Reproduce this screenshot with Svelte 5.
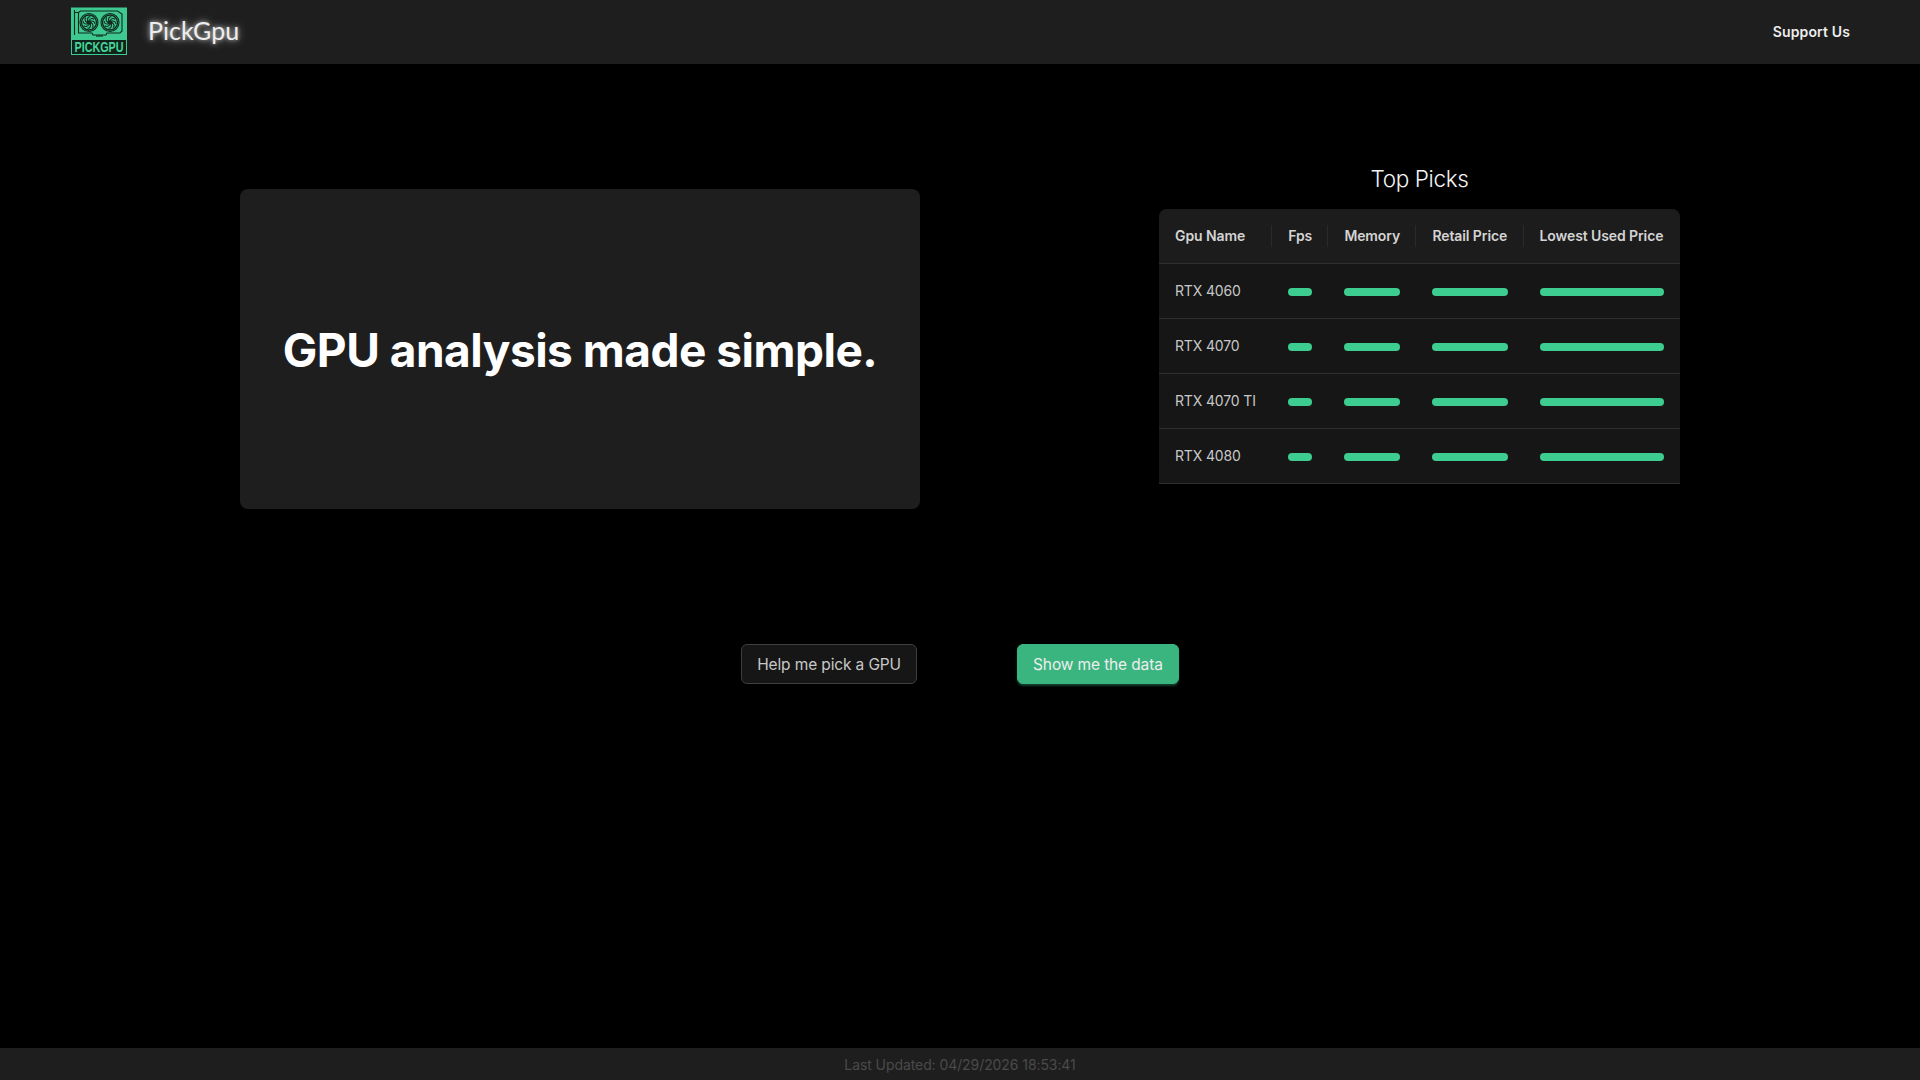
<script>
  const rows = ['RTX 4060', 'RTX 4070', 'RTX 4070 TI', 'RTX 4080']
  const columns = ['Gpu Name', 'Fps', 'Memory', 'Retail Price', 'Lowest Used Price']
  const fans = [18, 39]
  const blades = [0, 45, 90, 135, 180, 225, 270, 315]
</script>

<div class="page">
  <header>
    <div class="brand">
      <svg class="logo" viewBox="0 0 56 48" aria-label="PickGpu logo">
        <rect x="0" y="0.500" width="56" height="32" fill="#3dc98f" />
        <g fill="none" stroke="#12291f" stroke-width="1.1">
          <path d="M3.5 3v25M3.5 5.5h4l2-1.5h37l4.500 3v17l-2 2H36l-1 2H22l-1-2H7.500v-21" />
          <path d="M25 29h7" />
          {#each fans as cx}
            <circle {cx} cy="15.500" r="9" fill="#3dc98f" />
            <circle {cx} cy="15.500" r="7.500" stroke-width="1.400" />
            <circle {cx} cy="15.500" r="1.800" fill="#12291f" />
            {#each blades as angle}
              <path d="M{cx} 13.500c1.800-2.500 4-2.600 5-1" transform="rotate({angle} {cx} 15.500)" />
            {/each}
          {/each}
        </g>
        <rect x="0.500" y="32.500" width="55" height="15" fill="#10241b" stroke="#3dc98f" stroke-width="1" />
        <text x="36.400" y="45" text-anchor="middle" transform="scale(0.77 1)" class="logo-text">PICKGPU</text>
      </svg>
      <span class="name">PickGpu</span>
    </div>
    <span class="support">Support Us</span>
  </header>

  <main>
    <section class="top">
      <div class="hero">
        <h1>GPU analysis made simple.</h1>
      </div>
      <div class="picks">
        <h2>Top Picks</h2>
        <table>
          <thead>
            <tr>
              {#each columns as col}
                <th><span>{col}</span></th>
              {/each}
            </tr>
          </thead>
          <tbody>
            {#each rows as row}
              <tr>
                <td>{row}</td>
                <td><div class="bar"></div></td>
                <td><div class="bar"></div></td>
                <td><div class="bar"></div></td>
                <td><div class="bar"></div></td>
              </tr>
            {/each}
          </tbody>
        </table>
      </div>
    </section>

    <div class="actions">
      <button class="outline">Help me pick a GPU</button>
      <button class="primary">Show me the data</button>
    </div>
  </main>

  <footer>Last Updated: 04/29/2026 18:53:41</footer>
</div>

<style>
  :global(body) {
    background: #000;
    font-family: Inter, "Liberation Sans", sans-serif;
  }

  .page {
    display: flex;
    flex-direction: column;
    height: 100vh;
    overflow: hidden;
  }

  header {
    display: flex;
    align-items: center;
    justify-content: space-between;
    height: 64px;
    flex: none;
    box-sizing: border-box;
    padding: 0 70px 2px 71px;
    background: #1e1e1e;
  }

  .brand {
    display: flex;
    align-items: center;
    gap: 21px;
  }

  .logo {
    width: 56px;
    height: 48px;
    display: block;
  }

  .logo-text {
    font-family: "Liberation Sans", sans-serif;
    font-size: 14px;
    font-weight: 700;
    fill: #45d69a;
  }

  .name {
    font-family: Lato, sans-serif;
    font-size: 25px;
    margin-bottom: 2px;
    color: #ededed;
    text-shadow: 0 0 4px rgba(255, 255, 255, 0.6), 0 0 10px rgba(255, 255, 255, 0.55);
  }

  .support {
    font-size: 14px;
    font-weight: 600;
    letter-spacing: 0.12px;
    color: #ededed;
  }

  main {
    flex: 1;
    padding: 97px 240px 0;
  }

  .top {
    display: flex;
    justify-content: space-between;
    align-items: flex-start;
  }

  .hero {
    display: flex;
    align-items: center;
    justify-content: center;
    box-sizing: border-box;
    width: 680px;
    height: 320px;
    margin-top: 28px;
    padding-top: 2px;
    background: #1e1e1e;
    border-radius: 8px;
  }

  h1 {
    margin: 0;
    font-size: 46px;
    font-weight: 700;
    letter-spacing: -0.5px;
    color: #fff;
  }

  .picks {
    width: 521px;
  }

  h2 {
    margin: 0 0 12px;
    font-size: 22.5px;
    line-height: 36px;
    font-weight: 300;
    letter-spacing: -0.35px;
    text-align: center;
    color: #f4f4f4;
  }

  table {
    width: 100%;
    border-collapse: separate;
    border-spacing: 0;
    font-size: 14px;
    letter-spacing: -0.1px;
    color: #c8c8c8;
    background: #161616;
    border-radius: 8px 8px 0 0;
  }

  th {
    height: 54px;
    padding: 0 0 0 16px;
    background: #1c1c1c;
    border-bottom: 1px solid #2e2e2e;
    text-align: left;
    font-weight: 600;
    white-space: nowrap;
    color: #d4d4d4;
  }

  th:first-child {
    border-top-left-radius: 8px;
  }

  th:last-child {
    border-top-right-radius: 8px;
  }

  th span {
    display: block;
    line-height: 20px;
    padding-right: 16px;
  }

  th:not(:last-child) {
    background-image: linear-gradient(#2a2a2a, #2a2a2a);
    background-size: 1px 22px;
    background-position: right center;
    background-repeat: no-repeat;
  }

  td {
    height: 55px;
    padding: 0 16px 1px;
    box-sizing: border-box;
    border-bottom: 1px solid #2e2e2e;
    white-space: nowrap;
    letter-spacing: -0.15px;
  }

  .bar {
    height: 8px;
    border-radius: 4px;
    background: #3dcd91;
    margin-top: 2px;
  }

  .actions {
    display: flex;
    justify-content: center;
    gap: 100px;
    margin-top: 135px;
  }

  button {
    height: 40px;
    padding: 0 15px;
    border-radius: 6px;
    font-family: inherit;
    font-size: 15.5px;
    letter-spacing: -0.13px;
  }

  .outline {
    background: #161616;
    border: 1px solid #3e3e3e;
    color: #c8c8c8;
  }

  .primary {
    background: #3bb57f;
    border: 1px solid #3bb57f;
    color: #ededed;
    box-shadow: 0 2px 2px rgba(61, 205, 145, 0.3);
  }

  footer {
    flex: none;
    height: 32px;
    background: #1e1e1e;
    text-align: center;
    font-size: 14px;
    letter-spacing: -0.08px;
    line-height: 34px;
    color: #4a4a4a;
  }
</style>
